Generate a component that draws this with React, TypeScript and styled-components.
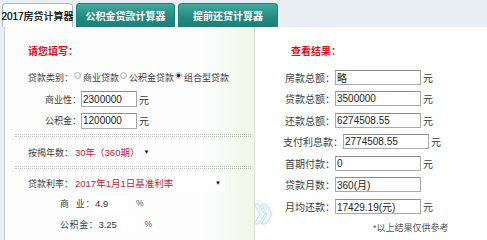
import React from 'react';
import styled, { createGlobalStyle, css } from 'styled-components';

const GlobalStyle = createGlobalStyle`
  html, body {
    margin: 0;
    padding: 0;
    background: #e8eef1;
  }
  body {
    width: 487px;
    height: 240px;
    overflow: hidden;
    font-family: "Liberation Sans", "Noto Sans CJK SC", sans-serif;
    font-size: 10px;
    color: #3d3d3d;
  }
`;

const Page = styled.div`
  width: 487px;
  height: 240px;
  display: flex;
  flex-direction: column;
`;

const TabBar = styled.div`
  height: 27px;
  flex: none;
  display: flex;
  align-items: flex-end;
  gap: 3px;
  padding-left: 2px;
  background: #e8eef2;
`;

const Tab = styled.div<{ $active?: boolean; $w: number }>`
  width: ${p => p.$w}px;
  height: 24px;
  box-sizing: border-box;
  display: flex;
  align-items: center;
  justify-content: center;
  border-radius: 4px 4px 0 0;
  font-size: 10px;
  font-weight: bold;
  white-space: nowrap;
  ${p => p.$active
    ? css`
      background: #fff;
      color: #222;
      border: 1px solid #a8bcc4;
      border-bottom: none;
      font-weight: normal;
      text-shadow: 0 0 0.5px #222;
    `
    : css`
      background: linear-gradient(#43a89e, #23897f 60%, #1b7f75);
      color: #fff;
      border: 1px solid #1f8177;
      border-bottom: none;
    `}
`;

const Body = styled.div`
  flex: 1;
  display: flex;
  padding-left: 4px;
`;

const LeftPanel = styled.div`
  width: 251px;
  flex: none;
  box-sizing: border-box;
  border-left: 1px solid #bccbd0;
  border-right: 1px solid #d6e2c9;
  background: linear-gradient(to right, #fcfdfc 80%, #f0f6e8);
  font-size: 9px;
`;

const RightPanel = styled.div`
  flex: 1;
  position: relative;
  background: #fff;
  padding-left: 28px;
`;

const Title = styled.div`
  height: 20px;
  margin-top: 13px;
  padding-left: 23px;
  display: flex;
  align-items: center;
  color: #d3141c;
  font-weight: bold;
  font-size: 10px;
`;

const RightTitle = styled(Title)`
  padding-left: 8px;
`;

const Row = styled.div<{ $h: number; $mt?: number; $pl?: number }>`
  height: ${p => p.$h}px;
  margin-top: ${p => p.$mt ?? 0}px;
  padding-left: ${p => p.$pl ?? 23}px;
  display: flex;
  align-items: center;
  white-space: nowrap;
`;

const Label = styled.span<{ $w?: number; $spread?: boolean }>`
  flex: none;
  min-width: ${p => p.$w ?? 0}px;
  text-align: right;
  letter-spacing: ${p => (p.$spread ? '0.6px' : '0')};
`;

const Field = styled.input<{ $w: number; $h: number }>`
  width: ${p => p.$w}px;
  height: ${p => p.$h}px;
  box-sizing: border-box;
  margin: 0;
  padding: 0 1px;
  border: 1px solid #a9a9a9;
  border-top-color: #8e8e8e;
  background: #fff;
  font-family: inherit;
  font-size: 10px;
  color: #222;
  outline: none;
`;

const Unit = styled.span`
  margin-left: 2px;
  font-size: 10px;
`;

const Radio = styled.span<{ $checked?: boolean }>`
  width: 7px;
  height: 7px;
  box-sizing: border-box;
  margin: 0 2px 0 1px;
  border-radius: 50%;
  border: 1px solid #b4b4b4;
  background: ${p => (p.$checked
    ? 'radial-gradient(circle, #333 0 1.6px, #e6e6e6 2.2px)'
    : 'radial-gradient(circle at 35% 35%, #fff, #d9d9d9)')};
  transform: translateY(-2px);
`;

const Dots = styled.div<{ $mt: number }>`
  margin: ${p => p.$mt}px 3px 0 10px;
  height: 1px;
  border-top: 1px dotted #bdbdbd;
  border-bottom: 1px dotted #bdbdbd;
`;

const Select = styled.span<{ $w?: number; $white?: boolean }>`
  display: flex;
  align-items: center;
  justify-content: space-between;
  width: ${p => (p.$w ? `${p.$w}px` : 'auto')};
  height: 15px;
  margin-left: 2px;
  padding-right: 4px;
  background: ${p => (p.$white ? '#fff' : 'transparent')};
  color: #b2243a;
  font-size: 9.5px;
`;

const Caret = styled.span`
  margin-left: 4px;
  font-size: 6px;
  color: #111;
`;

const RateBox = styled.span<{ $w: number }>`
  width: ${p => p.$w}px;
  height: 15px;
  display: flex;
  align-items: center;
  background: #fff;
  font-size: 9.5px;
  color: #333;
`;

const Percent = styled.span`
  margin-left: 8px;
  font-size: 8.5px;
  color: #555;
`;

const Note = styled.div`
  height: 21.5px;
  padding-left: 90px;
  display: flex;
  align-items: center;
  font-size: 9px;
  color: #555;
`;

const Chevron = styled.svg`
  position: absolute;
  left: -3px;
  top: 176px;
`;

const results: [string, string, boolean][] = [
  ['房款总额：', '略', true],
  ['贷款总额：', '3500000', true],
  ['还款总额：', '6274508.55', true],
  ['支付利息款：', '2774508.55', true],
  ['首期付款：', '0', true],
  ['贷款月数：', '360(月)', false],
  ['月均还款：', '17429.19(元)', true],
];

export default function App() {
  return (
    <Page>
      <GlobalStyle />
      <TabBar>
        <Tab $active $w={71}>2017房贷计算器</Tab>
        <Tab $w={99}>公积金贷款计算器</Tab>
        <Tab $w={100}>提前还贷计算器</Tab>
      </TabBar>
      <Body>
        <LeftPanel>
          <Title>请您填写：</Title>
          <Row $h={20} $mt={7}>
            <Label>贷款类别：</Label>
            <Radio />商业贷款
            <Radio />公积金贷款
            <Radio $checked />组合型贷款
          </Row>
          <Row $h={22} $mt={1}>
            <Label $w={53}>商业性：</Label>
            <Field $w={56} $h={16} readOnly value="2300000" />
            <Unit>元</Unit>
          </Row>
          <Row $h={21}>
            <Label $w={53}>公积金：</Label>
            <Field $w={56} $h={16} readOnly value="1200000" />
            <Unit>元</Unit>
          </Row>
          <Dots $mt={3} />
          <Row $h={22} $mt={4}>
            <Label>按揭年数：</Label>
            <Select>30年（360期）<Caret>▼</Caret></Select>
          </Row>
          <Dots $mt={3} />
          <Row $h={20} $mt={4}>
            <Label>贷款利率：</Label>
            <Select $w={146} $white>2017年1月1日基准利率<Caret>▼</Caret></Select>
          </Row>
          <Row $h={20} $pl={55}>
            <Label $spread>商&nbsp;&nbsp;业：</Label>
            <RateBox $w={33}>4.9</RateBox>
            <Percent>%</Percent>
          </Row>
          <Row $h={22} $pl={55}>
            <Label $spread>公积金：</Label>
            <RateBox $w={38}>3.25</RateBox>
            <Percent>%</Percent>
          </Row>
        </LeftPanel>
        <RightPanel>
          <Chevron width="22" height="22" viewBox="0 0 22 22">
            <path d="M2 1 L7 1 L13 11 L7 21 L2 21 L8 11 Z" fill="#eef5fa" stroke="#c6dcea" strokeWidth="1" />
            <path d="M9 1 L14 1 L20 11 L14 21 L9 21 L15 11 Z" fill="#eef5fa" stroke="#c6dcea" strokeWidth="1" />
          </Chevron>
          <RightTitle>查看结果：</RightTitle>
          {results.map(([label, value, unit], i) => (
            <Row key={label} $h={i === 0 ? 21 : 21.5} $mt={i === 0 ? 7 : 0} $pl={0}>
              <Label $w={52}>{label}</Label>
              <Field $w={86} $h={15} readOnly value={value} />
              {unit && <Unit>元</Unit>}
            </Row>
          ))}
          <Note>*以上结果仅供参考</Note>
        </RightPanel>
      </Body>
    </Page>
  );
}
